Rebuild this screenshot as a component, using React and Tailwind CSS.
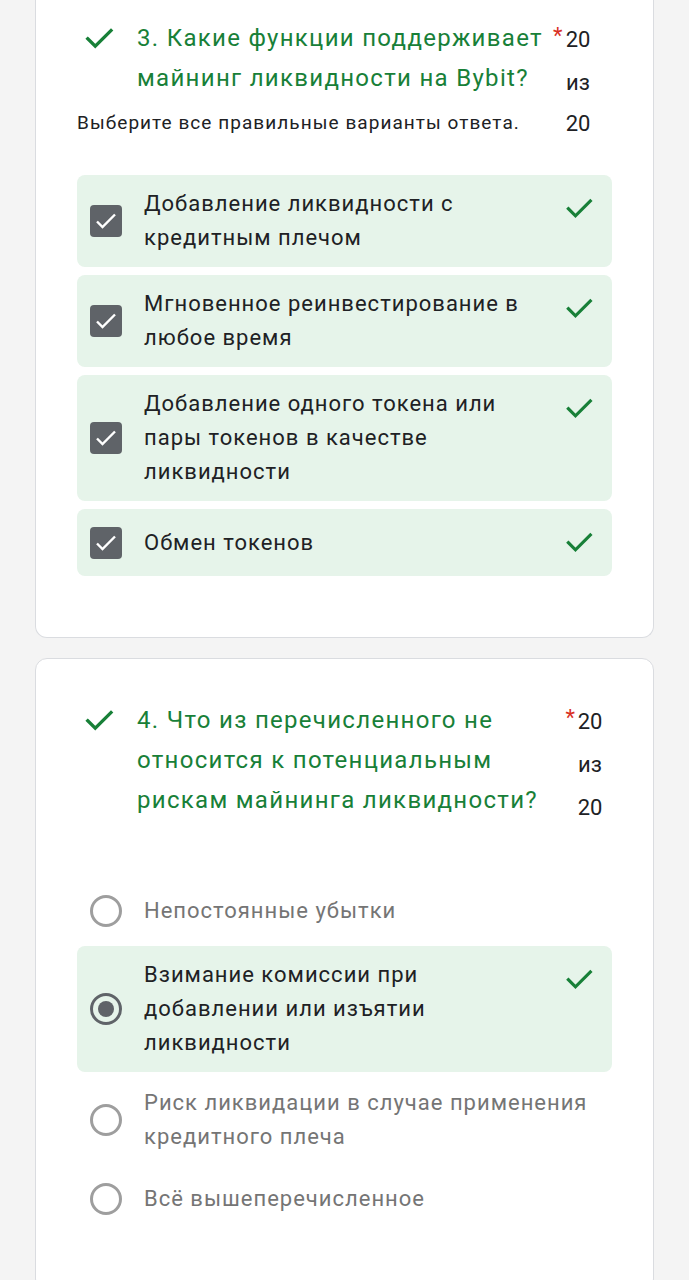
import React from "react";

const GREEN = "#188038";

function Check({ className = "" }) {
  return (
    <svg viewBox="0 0 24 24" className={className} fill="none">
      <path d="M4.5 12.5l5 5L20 7" stroke={GREEN} strokeWidth="2.2" strokeLinecap="square" />
    </svg>
  );
}

function CheckBox() {
  return (
    <div className="w-[32px] h-[32px] rounded-[4px] bg-[#5f6368] flex items-center justify-center shrink-0">
      <svg viewBox="0 0 32 32" className="w-[32px] h-[32px]" fill="none">
        <path d="M7 16.5l5.5 5.5L25 9.5" stroke="white" strokeWidth="2.4" />
      </svg>
    </div>
  );
}

function Radio({ selected }) {
  return (
    <div
      className={
        "w-[32px] h-[32px] rounded-full border-[3px] flex items-center justify-center shrink-0 " +
        (selected ? "border-[#5f6368]" : "border-[#9e9e9e]")
      }
    >
      {selected && <div className="w-[16px] h-[16px] rounded-full bg-[#5f6368]" />}
    </div>
  );
}

function Option({ lines, control, correct, highlight, muted, extra = "py-[12px]" }) {
  return (
    <div
      className={
        "flex items-center pl-[13px] pr-[16px] rounded-[8px] " +
        (highlight ? "bg-[#e6f4ea] " : "") +
        extra
      }
    >
      {control}
      <div
        className={
          "ml-[22px] flex-1 text-[22px] leading-[34px] tracking-[1px] " +
          (muted ? "text-[#757575]" : "text-[#202124]")
        }
      >
        {lines.map((l, i) => (
          <div key={i}>{l}</div>
        ))}
      </div>
      {correct && (
        <div className="self-start pt-[4px]">
          <Check className="w-[34px] h-[34px]" />
        </div>
      )}
    </div>
  );
}

export default function App() {
  return (
    <div
      className="min-h-[1280px] bg-[#f4f4f4] px-[35px] pb-[40px]"
      style={{ fontFamily: "Roboto, 'Noto Sans', sans-serif" }}
    >
      {/* Card 3 */}
      <div className="bg-white border border-[#dadce0] border-t-0 rounded-b-[12px] pl-[41px] pr-[41px] pt-[18px] pb-[61px]">
        <div className="flex">
          <div className="w-[60px] pt-[2px] shrink-0">
            <Check className="w-[36px] h-[36px] ml-[4px]" />
          </div>
          <div className="w-[416px] text-[24px] leading-[40px] tracking-[1.3px] text-[#188038]">
            <div>3. Какие функции поддерживает</div>
            <div>майнинг ликвидности на Bybit?</div>
          </div>
          <div className="text-[#d93025] text-[22px] leading-[36px] w-[10px]">*</div>
          <div className="w-[30px] text-center text-[22px] leading-[43px] text-[#202124]">
            <div>20</div>
            <div>из</div>
          </div>
        </div>
        <div className="flex items-center -mt-[2px]">
          <div className="w-[486px] text-[19px] text-[#202124] tracking-[1.05px]">
            Выберите все правильные варианты ответа.
          </div>
          <div className="w-[30px] text-center text-[22px] leading-[43px] text-[#202124]">20</div>
        </div>
        <div className="mt-[30px] flex flex-col gap-[8px]">
          <Option
            highlight
            correct
            control={<CheckBox />}
            lines={["Добавление ликвидности с", "кредитным плечом"]}
          />
          <Option
            highlight
            correct
            control={<CheckBox />}
            lines={["Мгновенное реинвестирование в", "любое время"]}
          />
          <Option
            highlight
            correct
            control={<CheckBox />}
            extra="pt-[12px] pb-[12px]"
            lines={["Добавление одного токена или", "пары токенов в качестве", "ликвидности"]}
          />
          <Option
            highlight
            correct
            control={<CheckBox />}
            extra="py-[12px] min-h-[67px]"
            lines={["Обмен токенов"]}
          />
        </div>
      </div>

      {/* Card 4 */}
      <div className="mt-[20px] bg-white border border-[#dadce0] rounded-[12px] pl-[41px] pr-[41px] pt-[41px] pb-[60px]">
        <div className="flex">
          <div className="w-[60px] pt-[2px] shrink-0">
            <Check className="w-[36px] h-[36px] ml-[4px]" />
          </div>
          <div className="flex-1 text-[24px] leading-[40px] tracking-[1.3px] text-[#188038]">
            <div>4. Что из перечисленного не</div>
            <div>относится к потенциальным</div>
            <div>рискам майнинга ликвидности?</div>
          </div>
          <div className="text-[#d93025] text-[22px] leading-[36px]">*</div>
          <div className="w-[30px] text-center text-[22px] leading-[43px] text-[#202124] mr-[7px]">
            <div>20</div>
            <div>из</div>
            <div>20</div>
          </div>
        </div>
        <div className="mt-[55px] flex flex-col gap-[8px]">
          <Option
            muted
            control={<Radio />}
            extra="min-h-[54px]"
            lines={["Непостоянные убытки"]}
          />
          <Option
            highlight
            correct
            control={<Radio selected />}
            lines={["Взимание комиссии при", "добавлении или изъятии", "ликвидности"]}
          />
          <Option
            muted
            control={<Radio />}
            extra="py-[6px]"
            lines={["Риск ликвидации в случае применения", "кредитного плеча"]}
          />
          <Option
            muted
            control={<Radio />}
            extra="min-h-[62px]"
            lines={["Всё вышеперечисленное"]}
          />
        </div>
      </div>
    </div>
  );
}
